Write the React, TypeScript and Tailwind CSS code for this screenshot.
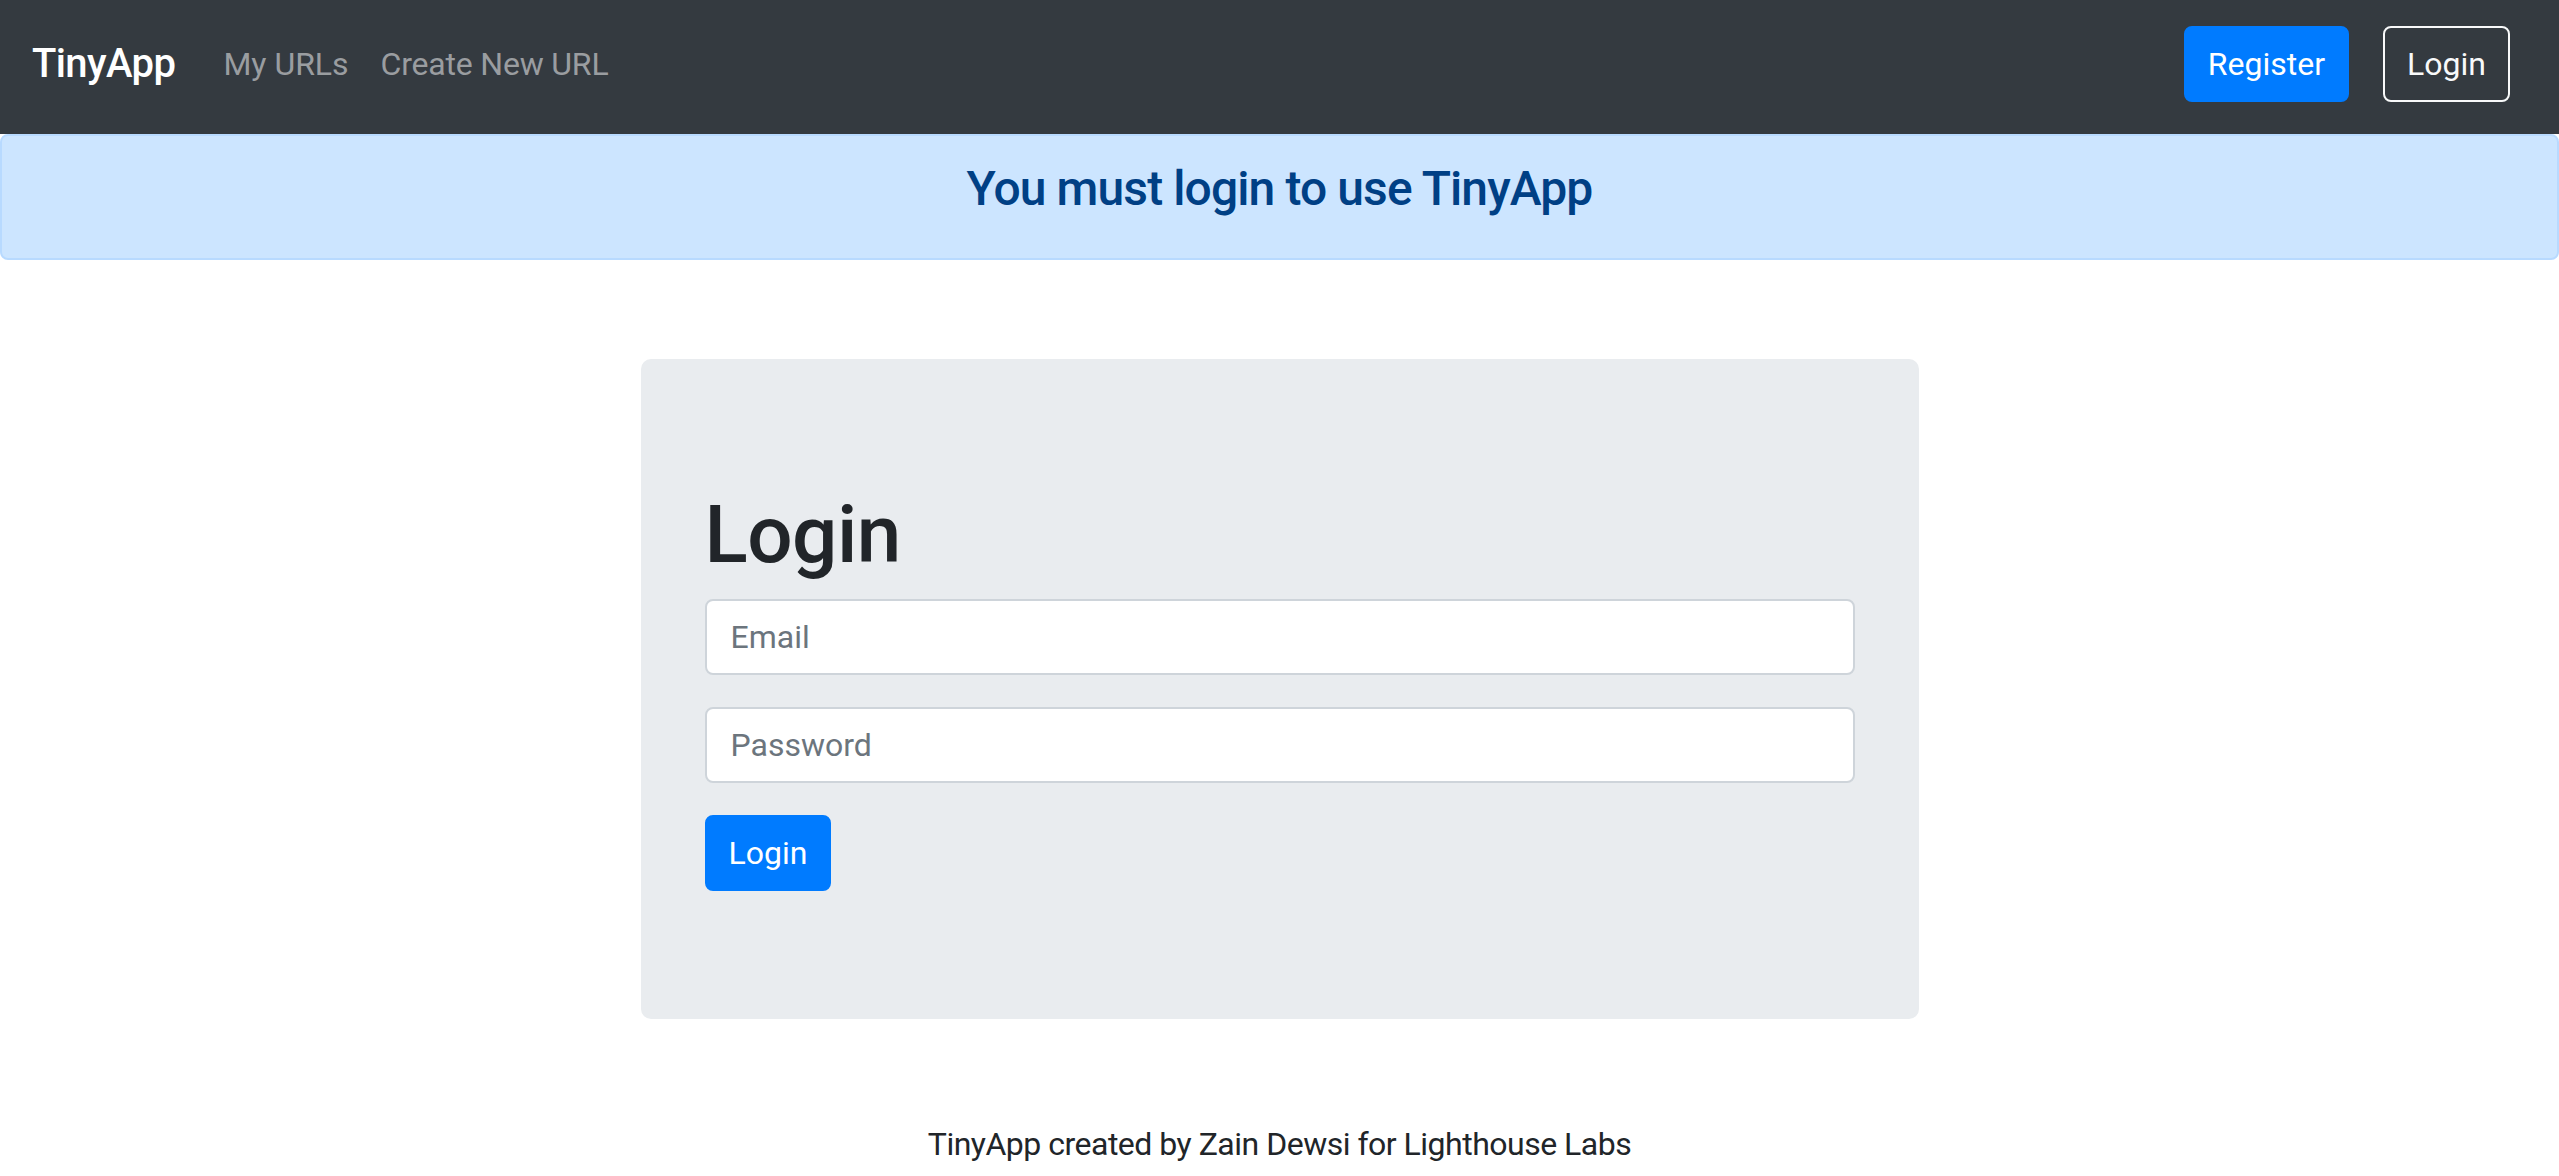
export default function App() {
  return (
    <div className="min-h-screen bg-white font-['Roboto','Noto_Sans',sans-serif] text-[#212529]">
      <nav className="flex h-[134px] items-center bg-[#343a40] px-[32px] pb-[6px]">
        <a href="#" className="mr-[32px] text-[40px] font-medium leading-[60px] tracking-[-0.6px] text-white">
          TinyApp
        </a>
        <a href="#" className="px-[16px] text-[32px] leading-[48px] text-[#9a9da0]">
          My URLs
        </a>
        <a href="#" className="px-[16px] text-[32px] leading-[48px] tracking-[-0.2px] text-[#9a9da0]">
          Create New URL
        </a>
        <div className="ml-auto mr-[17px] flex items-center gap-[34px]">
          <button className="h-[76px] rounded-[8px] border-2 border-[#007bff] bg-[#007bff] px-[22px] text-[32px] leading-[48px] text-white">
            Register
          </button>
          <button className="h-[76px] rounded-[8px] border-2 border-[#f8f9fa] px-[22px] text-[32px] leading-[48px] text-[#f8f9fa]">
            Login
          </button>
        </div>
      </nav>

      <div className="rounded-[8px] border-2 border-[#b8daff] bg-[#cce5ff] px-[40px] py-[24px] text-center">
        <h4 className="mb-[16px] text-[48px] font-medium leading-[1.2] tracking-[-0.9px] text-[#004085]">
          You must login to use TinyApp
        </h4>
      </div>

      <div className="mx-auto mt-[99px] w-[1278px] rounded-[10px] bg-[#e9ecef] px-[64px] py-[128px]">
        <h1 className="mb-[16px] text-[80px] font-medium leading-[1.2] tracking-[-0.5px] text-[#212529]">Login</h1>
        <form onSubmit={(e) => e.preventDefault()}>
          <input
            type="email"
            placeholder="Email"
            className="mb-[32px] block h-[76px] w-full rounded-[8px] border-2 border-[#ced4da] bg-white px-[24px] py-[12px] text-[32px] text-[#495057] outline-none placeholder:text-[#6c757d]"
          />
          <input
            type="password"
            placeholder="Password"
            className="mb-[32px] block h-[76px] w-full rounded-[8px] border-2 border-[#ced4da] bg-white px-[24px] py-[12px] text-[32px] text-[#495057] outline-none placeholder:text-[#6c757d]"
          />
          <button
            type="submit"
            className="h-[76px] rounded-[8px] border-2 border-[#007bff] bg-[#007bff] px-[22px] text-[32px] leading-[48px] text-white"
          >
            Login
          </button>
        </form>
      </div>

      <footer className="mt-[101px] text-center text-[32px] leading-[48px] tracking-[-0.5px] text-[#212529]">
        TinyApp created by Zain Dewsi for Lighthouse Labs
      </footer>
    </div>
  );
}
